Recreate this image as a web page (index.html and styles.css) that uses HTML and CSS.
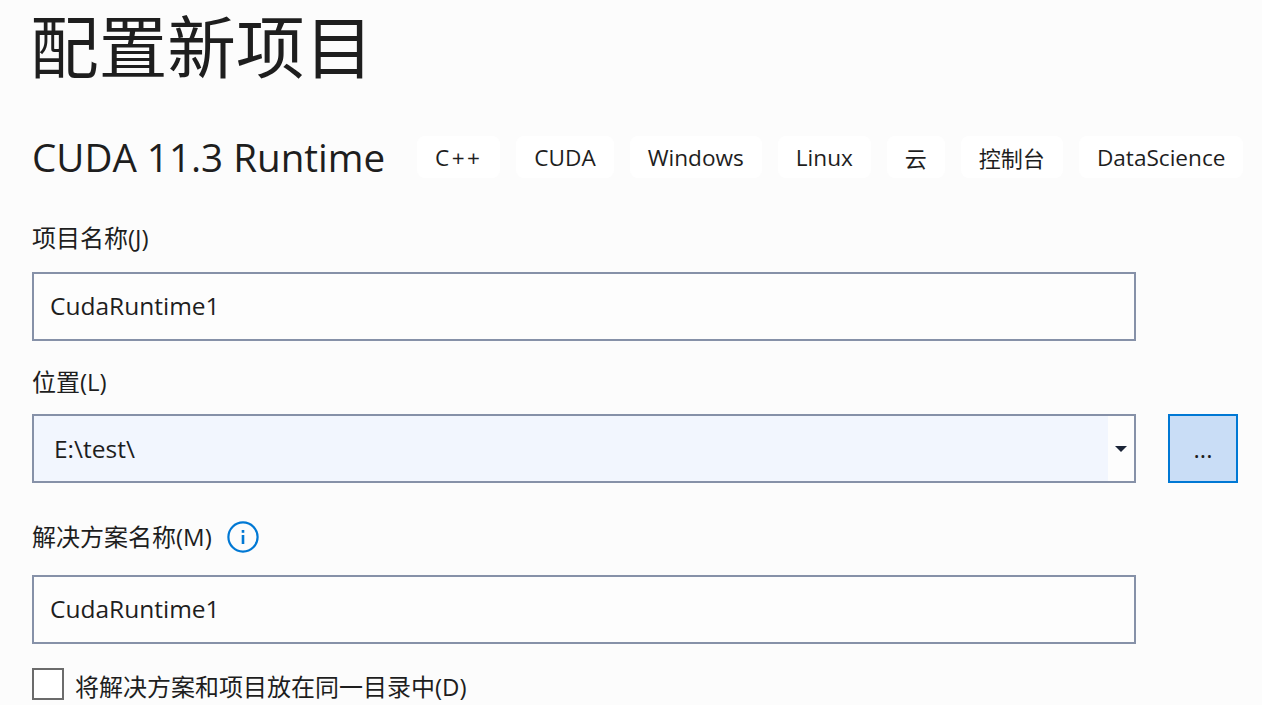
FILE: index.html
```html
<!DOCTYPE html>
<html lang="zh-CN">
<head>
    <meta charset="UTF-8">
    <title>配置新项目</title>
    <link rel="stylesheet" href="styles.css">
</head>
<body>
    <div class="page">
        <h1>配置新项目</h1>

        <div class="template-row">
            <h2>CUDA 11.3 Runtime</h2>
            <div class="tags">
                <span class="tag tag-plus">C++</span>
                <span class="tag">CUDA</span>
                <span class="tag">Windows</span>
                <span class="tag">Linux</span>
                <span class="tag tag-cjk">云</span>
                <span class="tag tag-cjk">控制台</span>
                <span class="tag">DataScience</span>
            </div>
        </div>

        <div class="form-group project-name">
            <label>项目名称(J)</label>
            <div class="text-box">CudaRuntime1</div>
        </div>

        <div class="form-group location">
            <label>位置(L)</label>
            <div class="location-row">
                <div class="combo">
                    <div class="combo-value">E:\test\</div>
                    <div class="combo-arrow"><span class="arrow"></span></div>
                </div>
                <button class="browse">...</button>
            </div>
        </div>

        <div class="form-group solution">
            <label class="with-icon">解决方案名称(M)
                <svg class="info" width="32" height="32" viewBox="0 0 32 32">
                    <circle cx="16" cy="16" r="14.6" fill="none" stroke="#0078d4" stroke-width="2.2"/>
                    <rect x="14.7" y="14" width="2.6" height="9" fill="#0078d4"/>
                    <rect x="14.7" y="9" width="2.6" height="2.8" fill="#0078d4"/>
                </svg>
            </label>
            <div class="text-box">CudaRuntime1</div>
        </div>

        <div class="check-row">
            <span class="checkbox"></span>
            <span class="check-label">将解决方案和项目放在同一目录中(D)</span>
        </div>
    </div>
</body>
</html>
```

FILE: styles.css
```css
html, body {
    margin: 0;
    height: 100%;
    overflow: hidden;
}

body {
    background: #fcfcfc;
    color: #1e1e1e;
    font-family: "Open Sans", "Noto Sans CJK SC", sans-serif;
    font-size: 24px;
}

.page {
    padding-left: 32px;
}

h1 {
    margin: 0 0 0 -2px;
    height: 96px;
    font-size: 68.7px;
    line-height: 86px;
    font-weight: 400;
    font-family: "Noto Sans CJK SC", sans-serif;
}

.template-row {
    display: flex;
    align-items: center;
    margin-top: 40px;
    height: 42px;
}

h2 {
    flex: none;
    margin: 0;
    width: 385px;
    font-size: 38.6px;
    font-weight: 400;
    white-space: nowrap;
}

.tags {
    display: flex;
    flex: none;
    gap: 16px;
}

.tag {
    height: 42px;
    line-height: 44px;
    padding: 0 18px;
    background: #fff;
    border-radius: 8px;
    font-size: 22.6px;
    white-space: nowrap;
}

.tag-plus {
    letter-spacing: 2.4px;
}

.tag-cjk {
    font-size: 22px;
}

label {
    display: block;
    height: 36px;
    line-height: 36px;
}

.project-name {
    margin-top: 42px;
}

.text-box, .combo {
    box-sizing: border-box;
    width: 1104px;
    height: 69px;
    border: 2px solid #8691a8;
    background: #fdfdfd;
    font-size: 24.5px;
}

.text-box {
    margin-top: 16px;
    padding-left: 16px;
    line-height: 63px;
}

.location {
    margin-top: 23px;
}

.location-row {
    display: flex;
    gap: 32px;
    margin-top: 14px;
}

.combo {
    display: flex;
}

.combo-value {
    flex: 1;
    padding-left: 20px;
    line-height: 66px;
    background: #f2f6fe;
}

.combo-arrow {
    width: 26px;
    display: flex;
    align-items: center;
    justify-content: center;
}

.arrow {
    width: 0;
    height: 0;
    border-left: 6px solid transparent;
    border-right: 6px solid transparent;
    border-top: 6px solid #1b2437;
}

.browse {
    box-sizing: border-box;
    width: 70px;
    height: 69px;
    padding: 0;
    border: 2px solid #0078d4;
    background: #c9ddf6;
    color: #1e1e1e;
    font: inherit;
}

.solution {
    margin-top: 36px;
}

.with-icon {
    display: flex;
    align-items: center;
    gap: 15px;
}

.solution .text-box {
    margin-top: 20px;
}

.check-row {
    display: flex;
    align-items: center;
    gap: 11px;
    margin-top: 20px;
}

.check-label {
    padding-top: 4px;
}

.checkbox {
    box-sizing: border-box;
    width: 32px;
    height: 32px;
    border: 2px solid #6b6b6b;
    background: #fff;
}
```
